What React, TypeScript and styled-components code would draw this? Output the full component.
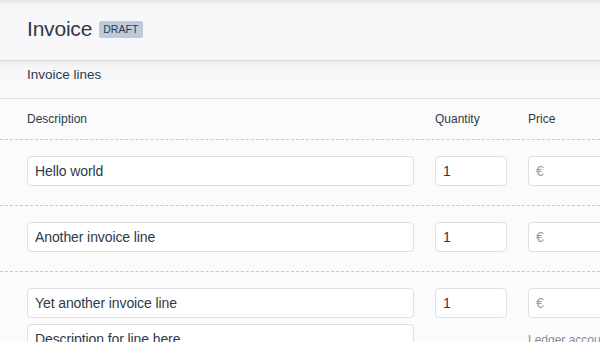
import styled, { createGlobalStyle } from 'styled-components'

const GlobalStyle = createGlobalStyle`
  html, body {
    margin: 0;
    padding: 0;
    background: #fbfbfc;
    overflow: hidden;
    font-family: "Liberation Sans", Arial, sans-serif;
    color: #2d3a4a;
  }
`

type Line = { description: string; extra?: string; quantity: string; ledger?: boolean }

const lines: Line[] = [
  { description: 'Hello world', quantity: '1' },
  { description: 'Another invoice line', quantity: '1' },
  { description: 'Yet another invoice line', extra: 'Description for line here', quantity: '1', ledger: true }
]

export default function App () {
  return (
    <Page>
      <GlobalStyle />
      <Header>
        <Title>Invoice</Title>
        <Badge>DRAFT</Badge>
      </Header>
      <SectionBar>Invoice lines</SectionBar>
      <HeadRow>
        <HeadCell>Description</HeadCell>
        <HeadCell>Quantity</HeadCell>
        <HeadCell>Price</HeadCell>
      </HeadRow>
      {lines.map((line, i) => (
        <Row key={i} last={i === lines.length - 1}>
          <Stack>
            <Input defaultValue={line.description} />
            {line.extra && <Input defaultValue={line.extra} />}
          </Stack>
          <Stack>
            <Input defaultValue={line.quantity} />
          </Stack>
          <Stack>
            <PriceBox>
              <Currency>€</Currency>
            </PriceBox>
            {line.ledger && <Hint>Ledger account</Hint>}
          </Stack>
        </Row>
      ))}
    </Page>
  )
}

const Page = styled.div`
  width: 600px;
  height: 342px;
  overflow: hidden;
`

const Header = styled.header`
  display: flex;
  align-items: center;
  gap: 7px;
  height: 61px;
  padding: 0 27px;
  box-sizing: border-box;
  background: linear-gradient(#e2e2e5 0, #f3f2f5 4px, #f8f7f9 9px, #f8f7f9 100%);
  border-bottom: 1px solid #d9d9dc;
`

const Title = styled.h1`
  margin: 0;
  font-size: 21px;
  font-weight: 400;
  letter-spacing: -0.2px;
  color: #2d3a4a;
  padding-bottom: 3px;
`

const Badge = styled.span`
  display: inline-flex;
  align-items: center;
  height: 17px;
  padding: 0 4px;
  border-radius: 2px;
  background: #bccadb;
  color: #2c3e50;
  font-size: 10.5px;
  letter-spacing: 0.1px;
  margin-top: -2px;
`

const SectionBar = styled.div`
  height: 38px;
  padding: 6px 27px 0;
  box-sizing: border-box;
  font-size: 13.5px;
  color: #2d3a4a;
  background: linear-gradient(#ececef 0, #f6f5f8 6px, #f8f8fa 12px, #f9f9fa 100%);
  border-bottom: 1px solid #e1e1e4;
`

const Grid = styled.div`
  display: grid;
  grid-template-columns: 387px 72px 150px;
  column-gap: 21px;
  padding: 0 27px;
`

const HeadRow = styled(Grid)`
  height: 41px;
  align-items: center;
  border-bottom: 1px dashed #c9c9cd;
  box-sizing: border-box;
`

const HeadCell = styled.div`
  font-size: 12px;
  color: #2d3a4a;
`

const Row = styled(Grid)<{ last?: boolean }>`
  padding-top: 16px;
  padding-bottom: 19px;
  border-bottom: ${p => (p.last ? 'none' : '1px dashed #c9c9cd')};
`

const Stack = styled.div`
  display: flex;
  flex-direction: column;
  gap: 6px;
`

const Input = styled.input`
  height: 30px;
  box-sizing: border-box;
  width: 100%;
  border: 1px solid #dfe0e4;
  border-radius: 4px;
  background: #fff;
  padding: 0 7px;
  font-family: "Liberation Sans", Arial, sans-serif;
  font-size: 14px;
  letter-spacing: -0.1px;
  color: #2d3a4a;
  outline: none;
`

const PriceBox = styled.div`
  display: flex;
  align-items: center;
  height: 30px;
  box-sizing: border-box;
  border: 1px solid #dfe0e4;
  border-radius: 4px;
  background: #fff;
  padding: 0 7px;
`

const Currency = styled.span`
  font-size: 14px;
  color: #9a9ca2;
`

const Hint = styled.div`
  font-size: 12px;
  color: #8a8d93;
  margin-top: 9px;
  white-space: nowrap;
`
